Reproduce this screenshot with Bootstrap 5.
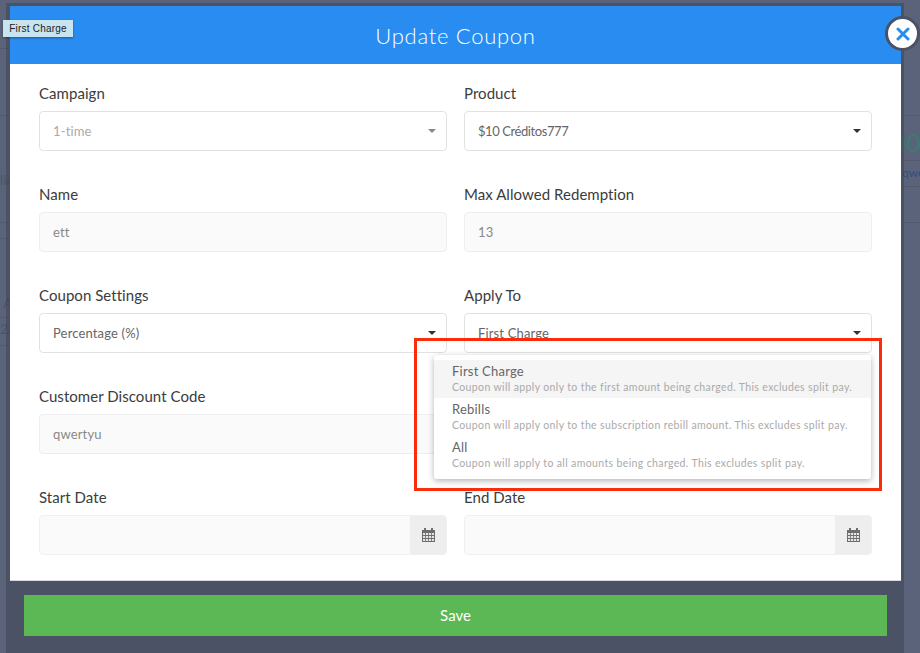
<!DOCTYPE html>
<html lang="en">
<head>
<meta charset="utf-8">
<title>Update Coupon</title>
<link href="https://cdn.jsdelivr.net/npm/bootstrap@5.3.0/dist/css/bootstrap.min.css" rel="stylesheet">
<style>
html,body{height:653px;overflow:hidden}
body{background:#5a637a;font-family:"Lato","Open Sans",sans-serif;color:#444}
.page-back{position:relative;width:920px;height:653px;overflow:hidden}
.back-line{position:absolute;height:1px;background:#525a70;width:10px;left:0}
.back-line.on-right{left:900px;width:20px}
.bl-48{top:48px}.bl-115{top:115px}.bl-160{top:160px}.bl-186{top:186px}.bl-222{top:222px}.bl-238{top:238px}.bl-317{top:317px}.bl-345{top:345px}
.back-text{position:absolute;font-size:14px;line-height:16px;color:#4b546b;white-space:nowrap}
.bt-lic{left:0;top:172px}
.bt-a{left:3px;top:295px}
.bt-28{left:0;top:321px}
.bt-teal{left:891px;top:130px;font-size:25px;line-height:25px;color:#3f7a72;letter-spacing:1px}
.bt-qwe{left:902px;top:165px;font-size:12px;color:#33507c}
.modal-shell{position:absolute;left:6px;top:3px;width:898px;height:650px;background:rgba(60,65,80,.5);padding:3px 3px 0 4px}
.modal-head{height:58px;background:#288cf0;color:#fff;font-size:22px;letter-spacing:.72px;font-weight:300}
.modal-main{background:#fff;height:517px;padding:21px 30px 0 29px;border-bottom:1px solid #d8dade}
.form-cols{display:grid;grid-template-columns:408px 408px;column-gap:17px;row-gap:0}
.field-box{height:101px}
.field-label{display:block;font-size:15px;line-height:18px;color:#3c3c3c;margin:-1px 0 9px;letter-spacing:.05px}
.fake-control{height:40px;border:1px solid #e2e2e2;border-radius:4px;background:#fff;font-size:13px;line-height:38px;padding:0 13px;color:#666;letter-spacing:.15px;position:relative}
.fake-control.is-off{background:#fafafa;color:#888;border-color:#eeeeee}
.fake-control.is-muted{color:#aaa}
.tight-num{letter-spacing:-.42px}
.caret-mark{position:absolute;right:10px;top:17px;width:0;height:0;border-left:4px solid transparent;border-right:4px solid transparent;border-top:4px solid #333}
.is-muted .caret-mark{border-top-color:#888}
.date-wrap{height:40px;display:flex;border:1px solid #f0f0f0;border-radius:4px;background:#fafafa;overflow:hidden}
.date-addon{width:36px;background:#eeeeee;display:flex;align-items:center;justify-content:center}
.foot-pad{padding:14px 14px 0}
.save-btn{display:block;width:863px;height:41px;background:#5cb755;border:0;border-radius:0;color:#fff;font-size:15px;padding:0}
.save-btn:hover{background:#5cb755;color:#fff}
.close-round{position:absolute;left:885px;top:16px;width:35px;height:35px;border-radius:50%;background:#fff;border:3px solid #4b5265;display:flex;align-items:center;justify-content:center;padding:0}
.tip-box{position:absolute;left:3px;top:20px;width:70px;height:17px;background:#c8e4f0;color:#222;font-family:"Liberation Sans",sans-serif;font-size:10px;line-height:17px;text-align:center;box-shadow:0 1px 2px rgba(0,0,0,.35);letter-spacing:.22px}
.opts-menu{position:absolute;left:434px;top:355px;width:437px;height:124px;background:#fff;border-radius:3px;box-shadow:0 2px 6px rgba(0,0,0,.3);padding:5px 0}
.opt-row{height:38px;padding:3px 18px 0}
.opt-row.is-on{background:#f5f5f5}
.opt-title{font-size:13px;line-height:17px;color:#666;letter-spacing:.22px}
.opt-sub{font-size:10.5px;line-height:15px;color:#aaa;letter-spacing:.37px;white-space:nowrap}
.red-mark{position:absolute;left:414px;top:338px;width:468px;height:153px;border:3px solid #fb2c0c;pointer-events:none}
</style>
</head>
<body>
<div class="page-back">
  <div class="back-line bl-48"></div>
  <div class="back-line bl-115"></div>
  <div class="back-line bl-222"></div>
  <div class="back-line bl-238"></div>
  <div class="back-line bl-317"></div>
  <div class="back-line bl-345"></div>
  <div class="back-line on-right bl-115"></div>
  <div class="back-line on-right bl-160"></div>
  <div class="back-line on-right bl-186"></div>
  <div class="back-line on-right bl-222"></div>
  <div class="back-text bt-lic">lic</div>
  <div class="back-text bt-a">A</div>
  <div class="back-text bt-28">28</div>
  <div class="back-text bt-teal">00</div>
  <div class="back-text bt-qwe">qwe</div>

  <div class="modal-shell">
    <div class="modal-head d-flex align-items-center justify-content-center">Update Coupon</div>
    <div class="modal-main">
      <div class="form-cols">
        <div class="field-box"><label class="field-label">Campaign</label><div class="fake-control is-muted">1-time<span class="caret-mark"></span></div></div>
        <div class="field-box"><label class="field-label">Product</label><div class="fake-control tight-num">$10 Créditos777<span class="caret-mark"></span></div></div>
        <div class="field-box"><label class="field-label">Name</label><div class="fake-control is-off">ett</div></div>
        <div class="field-box"><label class="field-label">Max Allowed Redemption</label><div class="fake-control is-off">13</div></div>
        <div class="field-box"><label class="field-label">Coupon Settings</label><div class="fake-control">Percentage (%)<span class="caret-mark"></span></div></div>
        <div class="field-box"><label class="field-label">Apply To</label><div class="fake-control">First Charge<span class="caret-mark"></span></div></div>
        <div class="field-box"><label class="field-label">Customer Discount Code</label><div class="fake-control is-off">qwertyu</div></div>
        <div class="field-box"></div>
        <div class="field-box"><label class="field-label">Start Date</label><div class="date-wrap"><div class="flex-grow-1"></div><div class="date-addon"><svg width="13" height="14" viewBox="0 0 13 14"><path fill="#6e6e6e" d="M0 2h2V0h2v2h5V0h2v2h2v12H0z"/><path fill="#e4e4e4" d="M1 5h2.2v2H1zM4 5h2.2v2H4zM7 5h2.2v2H7zM10 5h2v2h-2zM1 8h2.2v2H1zM4 8h2.2v2H4zM7 8h2.2v2H7zM10 8h2v2h-2zM1 11h2.2v2H1zM4 11h2.2v2H4zM7 11h2.2v2H7zM10 11h2v2h-2z"/></svg></div></div></div>
        <div class="field-box"><label class="field-label">End Date</label><div class="date-wrap"><div class="flex-grow-1"></div><div class="date-addon"><svg width="13" height="14" viewBox="0 0 13 14"><path fill="#6e6e6e" d="M0 2h2V0h2v2h5V0h2v2h2v12H0z"/><path fill="#e4e4e4" d="M1 5h2.2v2H1zM4 5h2.2v2H4zM7 5h2.2v2H7zM10 5h2v2h-2zM1 8h2.2v2H1zM4 8h2.2v2H4zM7 8h2.2v2H7zM10 8h2v2h-2zM1 11h2.2v2H1zM4 11h2.2v2H4zM7 11h2.2v2H7zM10 11h2v2h-2z"/></svg></div></div></div>
      </div>
    </div>
    <div class="foot-pad"><button type="button" class="btn save-btn">Save</button></div>
  </div>

  <button type="button" class="close-round" aria-label="Close"><svg width="14" height="14" viewBox="0 0 14 14"><path d="M2 2l10 10M12 2L2 12" stroke="#288cf0" stroke-width="3" stroke-linecap="round"/></svg></button>
  <div class="tip-box">First Charge</div>
  <div class="opts-menu">
    <div class="opt-row is-on"><div class="opt-title">First Charge</div><div class="opt-sub">Coupon will apply only to the first amount being charged. This excludes split pay.</div></div>
    <div class="opt-row"><div class="opt-title">Rebills</div><div class="opt-sub">Coupon will apply only to the subscription rebill amount. This excludes split pay.</div></div>
    <div class="opt-row"><div class="opt-title">All</div><div class="opt-sub">Coupon will apply to all amounts being charged. This excludes split pay.</div></div>
  </div>
  <div class="red-mark"></div>
</div>
</body>
</html>
